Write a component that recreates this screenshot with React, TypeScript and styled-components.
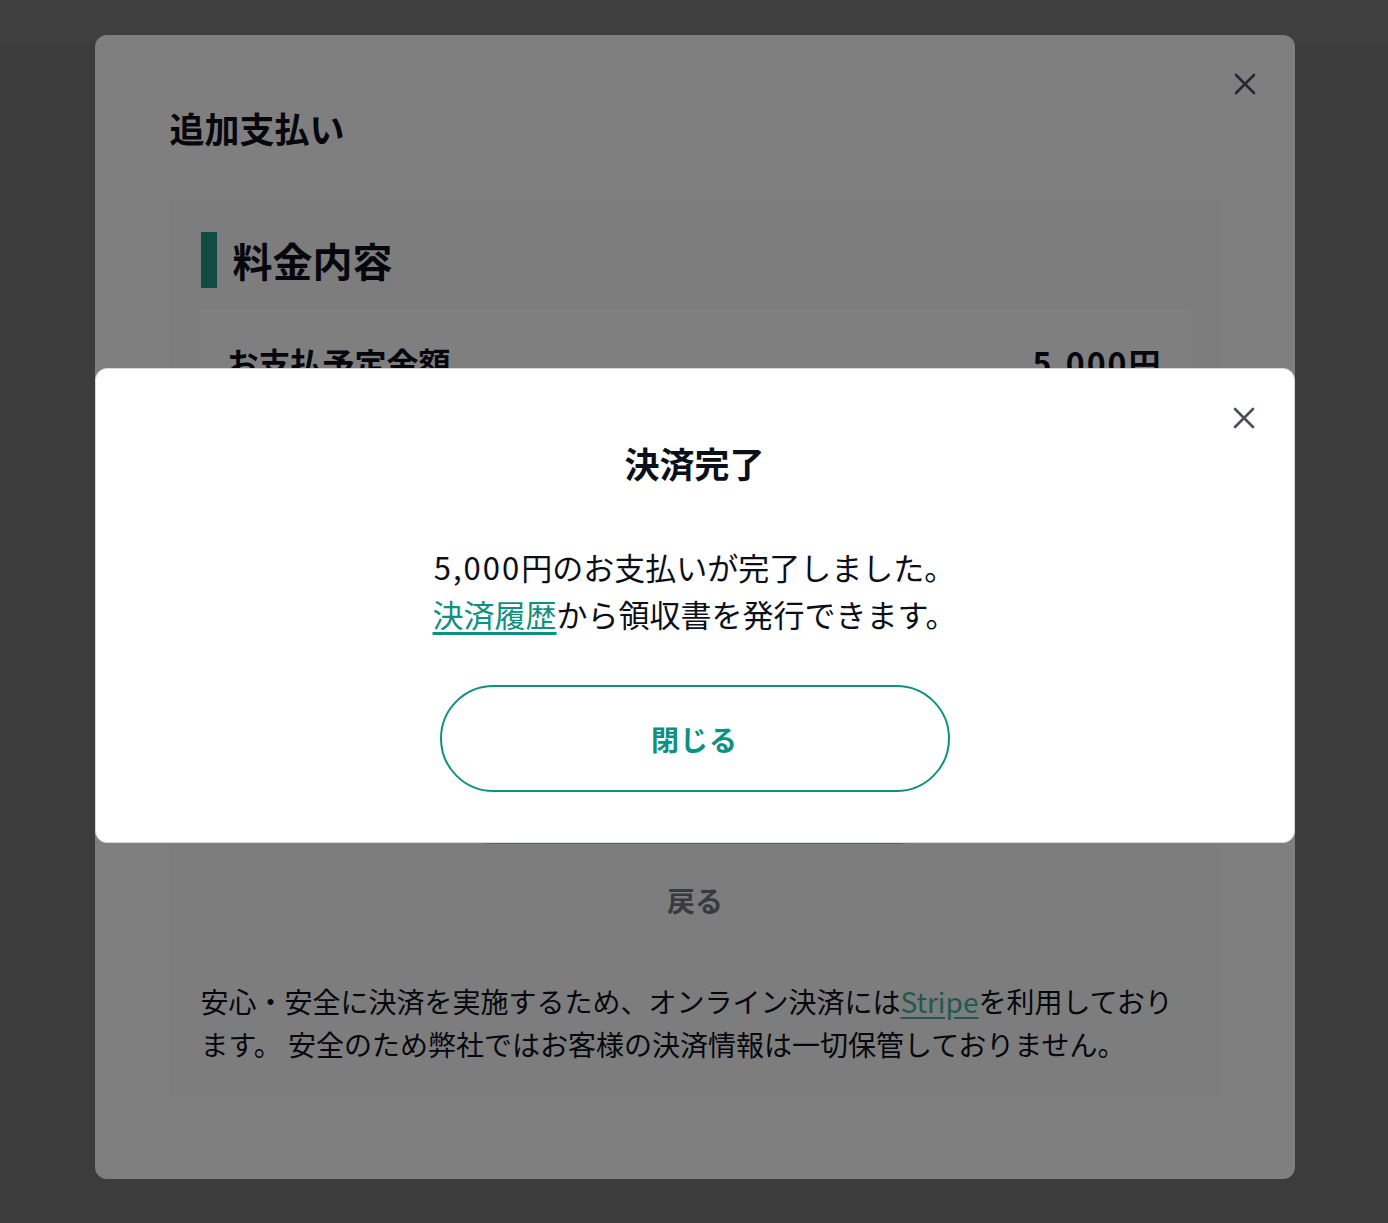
import styled, { createGlobalStyle } from 'styled-components';

const GlobalStyle = createGlobalStyle`
  html, body {
    margin: 0;
    padding: 0;
  }
  body {
    font-family: 'Noto Sans CJK JP', 'Noto Sans', sans-serif;
    color: #0b0f1a;
    background: #f2f2f2;
  }
  * {
    box-sizing: border-box;
  }
`;

const CloseIcon = ({ color }: { color: string }) => (
  <svg width="22" height="22" viewBox="0 0 22 22" fill="none">
    <path
      d="M2 2L20 20M20 2L2 20"
      stroke={color}
      strokeWidth="2.6"
      strokeLinecap="round"
    />
  </svg>
);

const App = () => {
  return (
    <>
      <GlobalStyle />
      <Page>
        <TopBar />
      </Page>

      <Overlay top={35}>
        <OuterModal>
          <CloseButton>
            <CloseIcon color="#4b5060" />
          </CloseButton>
          <ModalTitle>追加支払い</ModalTitle>
          <Section>
            <SectionHeading>
              <span className="bar" />
              料金内容
            </SectionHeading>
            <PriceCard>
              <PriceRow>
                <span>お支払予定金額</span>
                <span className="amount">5,000円</span>
              </PriceRow>
              <Divider />
              <FieldLabel>カード情報</FieldLabel>
              <FieldBox />
              <FieldLabel>カード名義</FieldLabel>
              <FieldBox />
            </PriceCard>
            <PayButton disabled>支払う</PayButton>
            <BackLink>戻る</BackLink>
            <Notice>
              安心・安全に決済を実施するため、オンライン決済には
              <a className="link">Stripe</a>
              を利用しております。 安全のため弊社ではお客様の決済情報は一切保管しておりません。
            </Notice>
          </Section>
        </OuterModal>
      </Overlay>

      <Overlay top={368}>
        <Dialog>
          <CloseButton>
            <CloseIcon color="#4b4f5c" />
          </CloseButton>
          <DialogTitle>決済完了</DialogTitle>
          <DialogText>
            <span className="num">5,000</span>円のお支払いが完了しました。
            <br />
            <a className="link">決済履歴</a>から領収書を発行できます。
          </DialogText>
          <OutlineButton>閉じる</OutlineButton>
        </Dialog>
      </Overlay>
    </>
  );
};

export default App;

const Page = styled.div`
  min-height: 100vh;
  background: #f2f2f2;
`;

const TopBar = styled.div`
  height: 45px;
  background: #ffffff;
  border-bottom: 1px solid #e2e2e2;
`;

type OverlayProps = {
  top: number;
};

const Overlay = styled.div<OverlayProps>`
  position: fixed;
  inset: 0;
  background: rgba(0, 0, 0, 0.5);
  display: flex;
  justify-content: center;
  align-items: flex-start;
  padding-top: ${(props) => props.top}px;
`;

const OuterModal = styled.div`
  position: relative;
  width: 1200px;
  background: #ffffff;
  border-radius: 12px;
  padding: 69px 75px 83px;
  margin-left: 1px;
`;

const CloseButton = styled.button`
  position: absolute;
  top: 38px;
  right: 39px;
  width: 22px;
  height: 22px;
  padding: 0;
  border: none;
  background: none;
  display: flex;
  cursor: pointer;
`;

const ModalTitle = styled.h2`
  margin: 0 0 48px;
  font-size: 35px;
  line-height: 48px;
  font-weight: 700;
  color: #0b0f1a;
`;

const Section = styled.div`
  background: #fafbfc;
  padding: 32px 30px 30px 31px;
  display: flex;
  flex-direction: column;
`;

const SectionHeading = styled.h3`
  margin: 0;
  height: 56px;
  display: flex;
  align-items: center;
  gap: 16px;
  font-size: 40px;
  font-weight: 700;
  color: #0b0f1a;
  .bar {
    width: 16px;
    height: 56px;
    background: #1e9884;
  }
`;

const PriceCard = styled.div`
  margin-top: 22px;
  height: 389px;
  background: #ffffff;
  padding: 28px 27px 30px 26px;
  display: flex;
  flex-direction: column;
`;

const PriceRow = styled.div`
  display: flex;
  justify-content: space-between;
  font-size: 32px;
  line-height: 48px;
  font-weight: 700;
  .amount {
    letter-spacing: 2px;
  }
`;

const Divider = styled.hr`
  margin: 24px 0;
  border: none;
  border-top: 1px solid #e5e7eb;
`;

const FieldLabel = styled.div`
  font-size: 22px;
  line-height: 32px;
  font-weight: 700;
  color: #374151;
`;

const FieldBox = styled.div`
  height: 56px;
  margin: 8px 0 16px;
  border: 1px solid #d1d5db;
  border-radius: 8px;
`;

const PayButton = styled.button`
  align-self: center;
  margin-top: 39px;
  width: 510px;
  height: 106px;
  border: none;
  border-radius: 53px;
  background: #b4c8c4;
  color: #ffffff;
  font-family: inherit;
  font-size: 28px;
  font-weight: 700;
`;

const BackLink = styled.div`
  margin-top: 35px;
  text-align: center;
  font-size: 28px;
  line-height: 42px;
  font-weight: 700;
  color: #727582;
`;

const Notice = styled.p`
  margin: 59px 0 0;
  font-size: 28px;
  line-height: 43px;
  color: #0b0f1a;
  .link {
    color: #3fb59c;
    text-decoration: underline;
    text-underline-offset: 4px;
  }
`;

const Dialog = styled.div`
  position: relative;
  width: 1200px;
  margin-left: 1px;
  background: #ffffff;
  border: 1px solid #d8d8de;
  border-radius: 12px;
  padding: 68px 0 50px;
  display: flex;
  flex-direction: column;
  align-items: center;
`;

const DialogTitle = styled.h2`
  margin: 0;
  font-size: 35px;
  line-height: 52px;
  font-weight: 700;
  color: #0b0f1a;
`;

const DialogText = styled.p`
  margin: 54px 0 0;
  text-align: center;
  font-size: 31px;
  line-height: 47px;
  color: #0b0f1a;
  .num {
    letter-spacing: 2px;
  }
  .link {
    color: #0e9180;
    text-decoration: underline;
    text-underline-offset: 5px;
  }
`;

const OutlineButton = styled.button`
  margin-top: 48px;
  width: 510px;
  height: 107px;
  border: 2px solid #0e9180;
  border-radius: 54px;
  background: #ffffff;
  color: #0e9180;
  font-family: inherit;
  font-size: 28px;
  font-weight: 700;
  letter-spacing: 1px;
  cursor: pointer;
`;
